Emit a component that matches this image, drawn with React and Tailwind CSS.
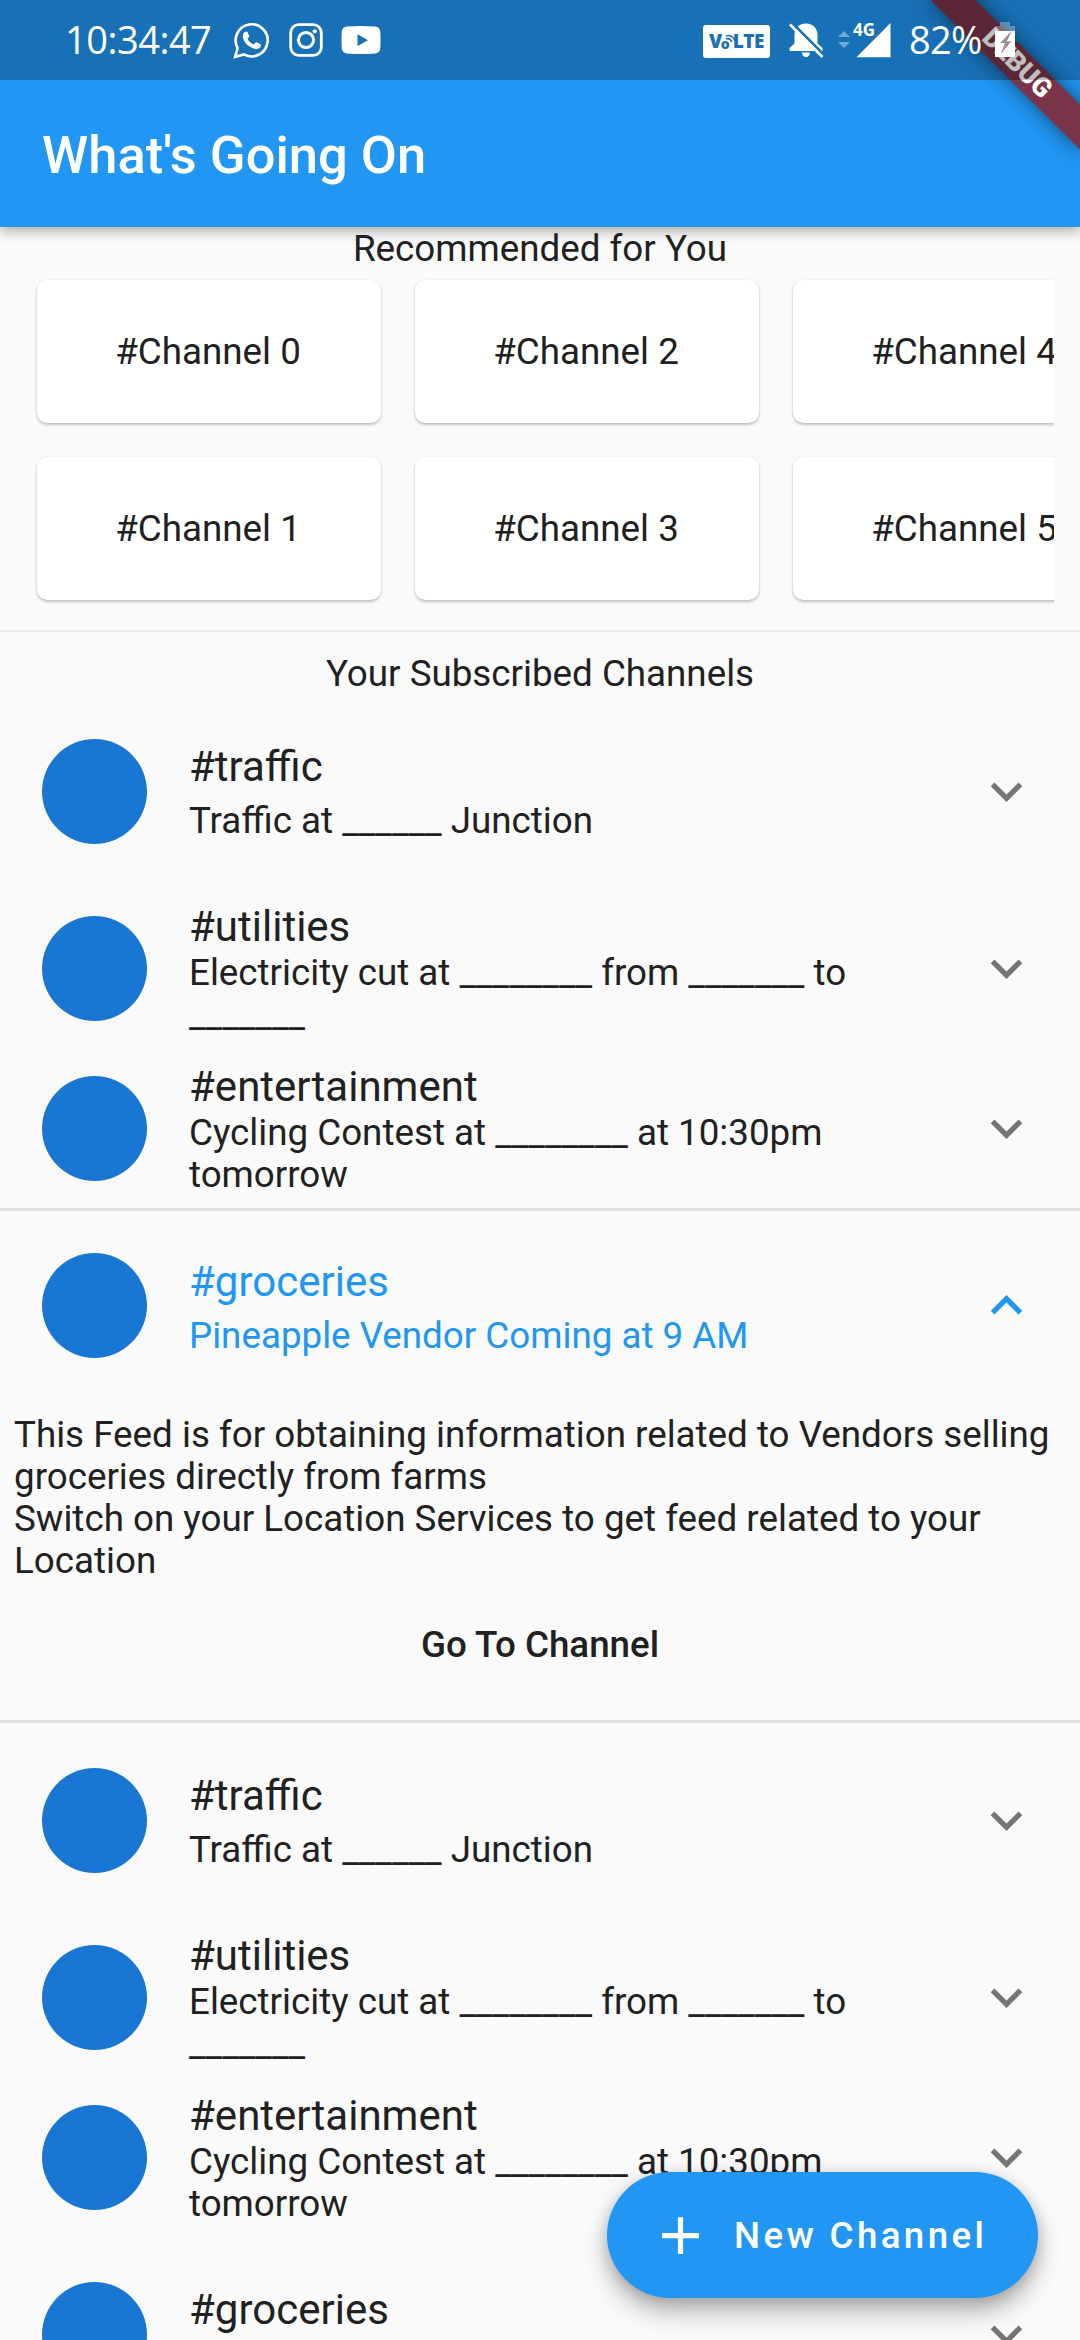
import React from "react";

const recommended = [
  ["#Channel 0", "#Channel 1"],
  ["#Channel 2", "#Channel 3"],
  ["#Channel 4", "#Channel 5"],
];

const feeds = {
  traffic: { title: "#traffic", lines: ["Traffic at ______ Junction"] },
  utilities: {
    title: "#utilities",
    lines: ["Electricity cut at ________ from _______ to", "_______"],
  },
  entertainment: {
    title: "#entertainment",
    lines: ["Cycling Contest at ________ at 10:30pm", "tomorrow"],
  },
  groceries: {
    title: "#groceries",
    lines: ["Pineapple Vendor Coming at 9 AM"],
  },
};

function WhatsAppIcon() {
  return (
    <svg className="w-[37px] h-[38px]" viewBox="0 0 37 38" fill="none">
      <path
        d="M2.200 35.800 L4.600 27 A16 16 0 1 1 11 33.400 Z"
        stroke="white"
        strokeWidth="2.600"
      />
      <path
        d="M11.500 11.300c1-1.100 2.600-1.200 3.200.1l1.400 3.200c.3.8-.1 1.400-.6 2l-1 1.100c1.400 2.700 3.500 4.600 6.300 5.800l1.500-1.700c.5-.6 1-.7 1.700-.4l3.200 1.600c.9.5 1 1 .7 2-.9 2.600-3.700 3.500-6.200 2.700-6-1.800-10.200-5.700-11.700-10.800-.6-2.100.1-4.200 1.500-5.600z"
        fill="white"
      />
    </svg>
  );
}

function InstagramIcon() {
  return (
    <svg className="w-[34px] h-[34px]" viewBox="0 0 34 34" fill="none" stroke="white">
      <rect x="1.700" y="1.700" width="30.600" height="30.600" rx="8" strokeWidth="2.800" />
      <circle cx="17" cy="17" r="7.600" strokeWidth="3" />
      <circle cx="25.800" cy="8.300" r="2.100" fill="white" stroke="none" />
    </svg>
  );
}

function YouTubeIcon() {
  return (
    <svg className="w-[40px] h-[28px]" viewBox="0 0 40 28">
      <path
        fill="white"
        fillRule="evenodd"
        d="M6 .6Q20-.4 34 .6Q38.600 1 39.200 5Q39.800 14 39.200 23Q38.600 27 34 27.400Q20 28.400 6 27.400Q1.400 27 .8 23Q.2 14 .8 5Q1.400 1 6 .6ZM16.500 8.300V20L27 14.200Z"
      />
    </svg>
  );
}

function VolteIcon() {
  return (
    <div className="relative flex items-center justify-between w-[67px] h-[33px] rounded-[3px] bg-white px-[6px] font-['Open_Sans',sans-serif] font-extrabold text-[19px] leading-none text-[#1b70b6] tracking-[-0.5px]">
      <span className="flex items-end">
        V<span className="text-[14px] leading-[15px] ml-[-1px]">o</span>
      </span>
      <span>LTE</span>
      <svg className="absolute left-[22px] top-[9px] w-[11px] h-[9px]" viewBox="0 0 11 9" fill="none" stroke="#1b70b6" strokeWidth="1.500">
        <path d="M1 2Q7 0 10 7M1 5Q5 3.500 7 8" />
      </svg>
    </div>
  );
}

function MutedBellIcon() {
  return (
    <svg className="w-[36px] h-[36px]" viewBox="0 0 36 36">
      <path
        fill="white"
        d="M18 1.500C25.500 1.500 29.500 7 29.500 13v8.500l5 4.500v3H1.500v-3l5-4.500V13C6.500 7 10.500 1.500 18 1.500zM14 30.500h8c0 2.500-1.500 4.500-4 4.500s-4-2-4-4.500z"
      />
      <path d="M3.500 0.500L36 33" stroke="#1971b6" strokeWidth="3" />
      <path d="M2 2.500L34.500 35" stroke="white" strokeWidth="2.600" />
    </svg>
  );
}

function SignalIcon() {
  return (
    <div className="relative w-[53px] h-[36px]">
      <svg className="w-[53px] h-[36px]" viewBox="0 0 53 36">
        <path d="M18.500 35.300H52.500V1L18.500 35.300z" fill="white" />
        <path d="M0 15l6-6 6 6zM0 20l6 6 6-6z" fill="white" fillOpacity=".4" />
      </svg>
      <span className="absolute left-[15px] top-px font-['Open_Sans',sans-serif] font-bold text-[17px] leading-[14px] text-white">
        4G
      </span>
    </div>
  );
}

function BatteryIcon() {
  return (
    <svg className="w-[20px] h-[36px]" viewBox="0 0 20 36">
      <path d="M5 0h10v4h5v5H0V4h5z" fill="white" fillOpacity=".3" />
      <path fillRule="evenodd" fill="white" d="M0 9h20v26H0zM16 10L5.500 21H10L6 31.500L16 19.500H11.500z" />
      <path d="M16 10L5.500 21H10L6 31.500L16 19.500H11.500z" fill="#9a8f95" />
    </svg>
  );
}

function StatusBar() {
  return (
    <div className="relative z-20 flex justify-between h-[80px] bg-black/25 pl-[65px] pr-[65px] text-white font-['Open_Sans',sans-serif] text-[38px] leading-[78px]">
      <div className="flex items-center">
        <span className="w-[168px] pb-[2px] tracking-[-0.5px]">10:34:47</span>
        <WhatsAppIcon />
        <span className="ml-[19px]"><InstagramIcon /></span>
        <span className="ml-[18px]"><YouTubeIcon /></span>
      </div>
      <div className="flex items-center">
        <span className="mt-[2px]"><VolteIcon /></span>
        <span className="ml-[18px]"><MutedBellIcon /></span>
        <span className="ml-[14px]"><SignalIcon /></span>
        <span className="ml-[18px] w-[86px] pb-[2px] tracking-[-0.7px]">82%</span>
        <BatteryIcon />
      </div>
    </div>
  );
}

function DebugRibbon() {
  return (
    <div className="absolute right-0 top-0 z-10 w-[180px] h-[180px] overflow-hidden">
      <div className="absolute left-[75px] top-[73.500px] w-[210px] h-[31.500px] origin-[105px_-73.500px] rotate-45 bg-[#961717]/77 shadow-[0_0_21px_rgba(0,0,0,0.5)] text-center text-white font-black text-[26.800px] leading-[31.500px]">
        DEBUG
      </div>
    </div>
  );
}

function Chevron({ up }) {
  return (
    <svg
      className={up ? "w-[63px] h-[63px] rotate-180 text-[#2196f3]" : "w-[63px] h-[63px] text-[#757575]"}
      viewBox="0 0 24 24"
      fill="currentColor"
    >
      <path d="M16.590 8.590L12 13.170 7.410 8.590 6 10l6 6 6-6z" />
    </svg>
  );
}

function FeedTile({ feed, open }) {
  const twoLine = feed.lines.length > 1;
  return (
    <div
      className={
        "flex items-center px-[42px] " +
        (twoLine ? "h-[160px] " : open ? "h-[195px] " : "h-[194px] ") +
        (open ? "text-[#2196f3]" : "")
      }
    >
      <div className="w-[105px] h-[105px] rounded-full bg-[#1976d2]" />
      <div className="flex-1 ml-[42px] pt-[3px] whitespace-nowrap">
        <div className={twoLine ? "text-[42px] leading-[48px] mb-px" : "text-[42px] leading-[48px] mb-[9px]"}>
          {feed.title}
        </div>
        {feed.lines.map((line) => (
          <div key={line} className="leading-[42px]">{line}</div>
        ))}
      </div>
      <Chevron up={open} />
    </div>
  );
}

export default function App() {
  return (
    <div className="relative w-[1080px] h-[2340px] overflow-hidden bg-[#fafafa] font-[Roboto,sans-serif] text-[36.750px] leading-[42px] text-[#212121]">
      <header className="relative z-10 h-[227px] bg-[#2196f3] shadow-[0_4px_12px_rgba(0,0,0,0.32)]">
        <StatusBar />
        <DebugRibbon />
        <h1 className="pt-[2px] pl-[42px] text-white font-medium text-[52.500px] leading-[147px]">What's Going On</h1>
      </header>

      <section className="relative z-10 h-[403px] pt-px">
        <h2 className="text-center">Recommended for You</h2>
        <div className="ml-[26px] mr-[26px] h-[352px] overflow-hidden flex gap-[34px] pl-[11px] pt-[10px]">
          {recommended.map((column) => (
            <div key={column[0]} className="flex flex-col gap-[34px] shrink-0">
              {column.map((name) => (
                <div
                  key={name}
                  className="flex items-center justify-center w-[344px] h-[143px] pr-[2px] rounded-[10.500px] bg-white shadow-[0_2px_3px_rgba(0,0,0,0.22),0_0_2px_rgba(0,0,0,0.08)]"
                >
                  {name}
                </div>
              ))}
            </div>
          ))}
        </div>
      </section>

      <section className="border-t-2 border-[#ebebeb]">
        <h2 className="pt-[21px] mb-[-1px] text-center">Your Subscribed Channels</h2>
        <div>
          <FeedTile feed={feeds.traffic} />
          <FeedTile feed={feeds.utilities} />
          <FeedTile feed={feeds.entertainment} />
          <div className="h-[515px] shadow-[inset_0_3px_0_#dedede,inset_0_-3px_0_#dedede]">
            <FeedTile feed={feeds.groceries} open />
            <div className="mt-[11px] px-[14px] whitespace-nowrap">
              <p>This Feed is for obtaining information related to Vendors selling<br />groceries directly from farms</p>
              <p>Switch on your Location Services to get feed related to your<br />Location</p>
            </div>
            <button className="block w-full mt-[42px] text-center font-medium">Go To Channel</button>
          </div>
          <FeedTile feed={feeds.traffic} />
          <FeedTile feed={feeds.utilities} />
          <FeedTile feed={feeds.entertainment} />
          <FeedTile feed={feeds.groceries} />
        </div>
      </section>

      <button className="absolute z-20 left-[607px] top-[2172px] w-[431px] h-[126px] rounded-full bg-[#2196f3] flex items-center pl-[42px] text-white font-medium tracking-[3.350px] whitespace-nowrap shadow-[0_14px_24px_rgba(0,0,0,0.28),0_2px_14px_rgba(0,0,0,0.16)]">
        <svg className="w-[63px] h-[63px]" viewBox="0 0 24 24" fill="white">
          <path d="M19 13h-6v6h-2v-6H5v-2h6V5h2v6h6v2z" />
        </svg>
        <span className="ml-[22px] pt-[2px]">New Channel</span>
      </button>
    </div>
  );
}
